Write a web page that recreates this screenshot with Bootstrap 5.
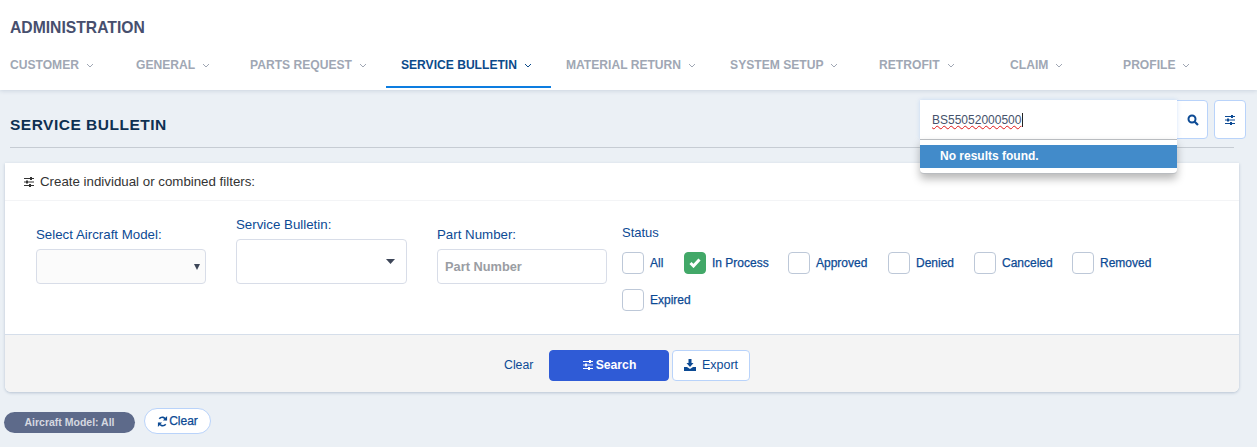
<!DOCTYPE html>
<html lang="en">
<head>
    <meta charset="UTF-8">
    <meta name="viewport" content="width=device-width, initial-scale=1.0">
    <title>Service Bulletin</title>
    <link href="https://cdn.jsdelivr.net/npm/bootstrap@5.3.2/dist/css/bootstrap.min.css" rel="stylesheet">
    <style>
        body {
            background-color: #ebf0f5;
            font-family: "Liberation Sans", Arial, sans-serif;
            font-size: 12px;
            color: #0c4a94;
            overflow: hidden;
        }
        .top-header {
            height: 90px;
            background-color: #fff;
            box-shadow: 0 1px 4px rgba(60, 90, 130, 0.18);
            padding-top: 18px;
        }
        .admin-title {
            font-size: 15.7px;
            font-weight: 700;
            line-height: 20px;
            color: #474f6e;
            margin: 0 0 0 10px;
        }
        .tab-strip {
            margin-top: 7px;
        }
        .tab-item {
            height: 43px;
            padding: 12px 19px 0 15px;
            min-width: 113px;
            font-size: 12.1px;
            font-weight: 700;
            line-height: 16px;
            color: #a0a7b4;
            white-space: nowrap;
        }
        .tab-item svg {
            margin-left: 7px;
            vertical-align: 1px;
        }
        .tab-first { padding-left: 10px; min-width: 121px; }
        .tab-mid { min-width: 114px; }
        .tab-setup { min-width: 149px; }
        .tab-wide { min-width: 131px; }
        .tab-active {
            color: #0b4a8a;
            border-bottom: 2px solid #0d7de0;
        }
        .title-bar {
            position: relative;
            height: 58px;
            margin: 0 23px 15px 10px;
            padding-top: 25px;
            border-bottom: 1px solid #c6ccd3;
        }
        .page-title {
            font-size: 15.5px;
            font-weight: 700;
            letter-spacing: .5px;
            line-height: 20px;
            color: #0e3052;
            margin: 0;
        }
        .search-box {
            position: absolute;
            z-index: 2;
            left: 910px;
            top: 10px;
            width: 257px;
        }
        .search-field {
            height: 39px;
            background-color: #fff;
            padding: 11px 0 0 12px;
            font-size: 12px;
            line-height: 18px;
            color: #46526b;
            box-shadow: 0 0 4px rgba(120, 170, 240, 0.35);
        }
        .search-field span {
            text-decoration: underline wavy #e01818 1px;
            border-right: 1px solid #222;
            padding-right: 1px;
        }
        .no-results {
            background-color: #fff;
            padding: 5px 0;
            height: 35px;
            border: 1px solid #b9bcc0;
            border-left: 0;
            border-right: 0;
            border-radius: 0 0 4px 4px;
            box-shadow: 0 5px 9px rgba(0, 0, 0, 0.28);
        }
        .no-results div {
            height: 23px;
            background-color: #428bca;
            color: #fff;
            font-size: 12px;
            font-weight: 700;
            line-height: 22px;
            padding-left: 20px;
        }
        .square-btn {
            position: absolute;
            top: 10px;
            height: 39px;
            padding: 0;
            background-color: #fff;
            border: 1px solid #b9d3fa;
            border-radius: 4px;
            color: #0c4a94;
        }
        .btn-find { left: 1160px; width: 38px; padding-left: 7px; }
        .btn-tune { left: 1204px; width: 32px; }
        .filter-panel {
            margin: 0 18px 0 5px;
            height: 229px;
            background-color: #fff;
            border: 0;
            border-radius: 0 0 6px 6px;
            box-shadow: 0 1px 3px rgba(60, 90, 130, 0.3);
        }
        .panel-head {
            height: 38px;
            padding: 11px 0 0 18px;
            border-bottom: 1px solid #f3f4f6;
            font-size: 13.3px;
            line-height: 16px;
            color: #333;
        }
        .panel-head svg { margin-right: 5px; vertical-align: -2px; }
        .panel-body {
            height: 133px;
            padding-left: 31px;
            gap: 30px;
        }
        .field-col {
            width: 170px;
            height: 83px;
        }
        .field-wider { width: 171px; }
        .field-col label {
            color: #0c4a94;
            font-size: 13.3px;
            line-height: 16px;
            margin-bottom: 6px;
        }
        .pick-box {
            height: 35px;
            padding: 0 7px;
            border: 1px solid #d8dde8;
            border-radius: 4px;
            background-color: #fff;
            font-size: 12.8px;
            color: #888;
            box-shadow: none;
        }
        .pick-grey {
            background-color: #fbfbfb;
            background-image: url("data:image/svg+xml,%3Csvg xmlns='http://www.w3.org/2000/svg' width='8' height='8'%3E%3Cpath d='M1 1h6L4 7z' fill='%233d4658'/%3E%3C/svg%3E");
            background-position: right 4px center;
            background-size: 8px 8px;
        }
        .pick-tall {
            height: 45px;
            background-image: url("data:image/svg+xml,%3Csvg xmlns='http://www.w3.org/2000/svg' width='9' height='5'%3E%3Cpath d='M0 0h9L4.500 5z' fill='%233d4658'/%3E%3C/svg%3E");
            background-position: right 11px center;
            background-size: 9px 5px;
        }
        .pick-box::placeholder { color: #9a9da3; font-weight: 700; }
        .status-col {
            width: 600px;
            margin-left: -15px;
            padding-top: 24px;
        }
        .status-title {
            font-size: 13px;
            line-height: 16px;
            margin-bottom: 11px;
        }
        .status-list {
            row-gap: 15px;
        }
        .status-opt {
            height: 22px;
            font-size: 12px;
            -webkit-text-stroke: .25px currentColor;
            line-height: 23px;
        }
        .status-opt i {
            display: block;
            width: 22px;
            height: 22px;
            margin-right: 6px;
            border: 1px solid #bdc8d8;
            border-radius: 4px;
            background-color: #fff;
        }
        .status-opt i.ticked {
            background-color: #42a868;
            border-color: #42a868;
            padding: 5px 4px;
        }
        .status-opt i.ticked svg { display: block; }
        .w-all { width: 62px; }
        .w-process { width: 104px; }
        .w-approved { width: 100px; }
        .w-denied { width: 86px; }
        .w-canceled { width: 98px; }
        .panel-foot {
            height: 58px;
            background-color: #f4f4f4;
            border-top: 1px solid #d5deea;
            border-radius: 0 0 6px 6px;
            padding-top: 15px;
            padding-left: 499px;
        }
        .foot-clear {
            width: 45px;
            font-size: 12.3px;
            line-height: 31px;
            color: #0c4a94;
        }
        .foot-btn {
            height: 31px;
            padding: 0;
            font-size: 12.5px;
            line-height: 29px;
            border-radius: 4px;
        }
        .foot-search {
            width: 120px;
            margin-right: 3px;
            background-color: #2f5bd6;
            border: 1px solid #2f5bd6;
            color: #fff;
            font-size: 12.2px;
            font-weight: 700;
        }
        .foot-search svg { margin-right: 2px; }
        .foot-export {
            width: 78px;
            background-color: #fff;
            border: 1px solid #b9d3fa;
            color: #0c4a94;
        }
        .foot-export svg { margin-right: 6px; }
        .foot-btn svg { vertical-align: -2px; }
        .applied-row {
            margin: 20px 0 0 4px;
            gap: 9px;
        }
        .applied-pill {
            width: 131px;
            height: 21px;
            border-radius: 11px;
            background-color: #5d6a8a;
            color: #d5d8e0;
            font-size: 10.500px;
            font-weight: 700;
            line-height: 21px;
            text-align: center;
        }
        .applied-clear {
            width: 67px;
            height: 26px;
            padding: 0;
            margin-top: -4px;
            background-color: #fff;
            border: 1px solid #b9d3fa;
            border-radius: 13px;
            color: #0c4a94;
            font-size: 12px;
            -webkit-text-stroke: .25px currentColor;
            line-height: 24px;
        }
        .applied-clear svg { vertical-align: -2px; margin-right: 1px; }
    </style>
</head>
<body>
    <!-- Cabecera -->
    <header class="top-header">
        <h1 class="admin-title">ADMINISTRATION</h1>
        <nav class="tab-strip d-flex">
            <div class="tab-item tab-first">CUSTOMER<svg width="8" height="5" viewBox="0 0 8 5"><path d="M1 1l3 3 3-3" fill="none" stroke="currentColor"/></svg></div>
            <div class="tab-item tab-mid">GENERAL<svg width="8" height="5" viewBox="0 0 8 5"><path d="M1 1l3 3 3-3" fill="none" stroke="currentColor"/></svg></div>
            <div class="tab-item">PARTS REQUEST<svg width="8" height="5" viewBox="0 0 8 5"><path d="M1 1l3 3 3-3" fill="none" stroke="currentColor"/></svg></div>
            <div class="tab-item tab-active">SERVICE BULLETIN<svg width="8" height="5" viewBox="0 0 8 5"><path d="M1 1l3 3 3-3" fill="none" stroke="currentColor"/></svg></div>
            <div class="tab-item">MATERIAL RETURN<svg width="8" height="5" viewBox="0 0 8 5"><path d="M1 1l3 3 3-3" fill="none" stroke="currentColor"/></svg></div>
            <div class="tab-item tab-setup">SYSTEM SETUP<svg width="8" height="5" viewBox="0 0 8 5"><path d="M1 1l3 3 3-3" fill="none" stroke="currentColor"/></svg></div>
            <div class="tab-item tab-wide">RETROFIT<svg width="8" height="5" viewBox="0 0 8 5"><path d="M1 1l3 3 3-3" fill="none" stroke="currentColor"/></svg></div>
            <div class="tab-item">CLAIM<svg width="8" height="5" viewBox="0 0 8 5"><path d="M1 1l3 3 3-3" fill="none" stroke="currentColor"/></svg></div>
            <div class="tab-item">PROFILE<svg width="8" height="5" viewBox="0 0 8 5"><path d="M1 1l3 3 3-3" fill="none" stroke="currentColor"/></svg></div>
        </nav>
    </header>

    <!-- Titulo y busqueda -->
    <div class="title-bar">
        <h2 class="page-title">SERVICE BULLETIN</h2>
        <div class="search-box">
            <div class="search-field"><span>BS55052000500</span></div>
            <div class="no-results"><div>No results found.</div></div>
        </div>
        <button class="square-btn btn-find" type="button" aria-label="Search"><svg width="12" height="12" viewBox="0 0 12 12"><circle cx="5" cy="5" r="3.500" fill="none" stroke="currentColor" stroke-width="2"/><path d="M7.700 7.700L11 11" stroke="currentColor" stroke-width="2.200"/></svg></button>
        <button class="square-btn btn-tune" type="button" aria-label="Filters"><svg width="12" height="12" viewBox="0 0 12 12"><path d="M1 2.500h10M1 6h10M1 9.500h10" stroke="currentColor"/><path d="M7 1h2v3H7zM3 4.500h2v3H3zM6 8h2v3H6z" fill="currentColor"/></svg></button>
    </div>

    <!-- Filtros -->
    <section class="filter-panel card">
        <div class="panel-head"><svg width="12" height="12" viewBox="0 0 12 12"><path d="M1 2.500h10M1 6h10M1 9.500h10" stroke="#333"/><path d="M7 1h2v3H7zM3 4.500h2v3H3zM6 8h2v3H6z" fill="#333"/></svg>Create individual or combined filters:</div>
        <div class="panel-body d-flex align-items-start">
            <div class="field-col d-flex flex-column justify-content-end">
                <label for="model">Select Aircraft Model:</label>
                <select id="model" class="form-select pick-box pick-grey"></select>
            </div>
            <div class="field-col field-wider d-flex flex-column justify-content-end">
                <label for="bulletin">Service Bulletin:</label>
                <select id="bulletin" class="form-select pick-box pick-tall"></select>
            </div>
            <div class="field-col d-flex flex-column justify-content-end">
                <label for="part">Part Number:</label>
                <input id="part" type="text" class="form-control pick-box" placeholder="Part Number">
            </div>
            <div class="status-col">
                <div class="status-title">Status</div>
                <div class="status-list d-flex flex-wrap">
                    <div class="status-opt w-all d-flex"><i></i>All</div>
                    <div class="status-opt w-process d-flex"><i class="ticked"><svg width="12" height="10" viewBox="0 0 12 10"><path d="M1.500 5l3 3 6-6.500" fill="none" stroke="#fff" stroke-width="3"/></svg></i>In Process</div>
                    <div class="status-opt w-approved d-flex"><i></i>Approved</div>
                    <div class="status-opt w-denied d-flex"><i></i>Denied</div>
                    <div class="status-opt w-canceled d-flex"><i></i>Canceled</div>
                    <div class="status-opt d-flex"><i></i>Removed</div>
                    <div class="status-opt w-100 d-flex"><i></i>Expired</div>
                </div>
            </div>
        </div>
        <div class="panel-foot d-flex">
            <div class="foot-clear">Clear</div>
            <button type="button" class="btn foot-btn foot-search"><svg width="12" height="12" viewBox="0 0 12 12"><path d="M1 2.500h10M1 6h10M1 9.500h10" stroke="#fff"/><path d="M7 1h2v3H7zM3 4.500h2v3H3zM6 8h2v3H6z" fill="#fff"/></svg>Search</button>
            <button type="button" class="btn foot-btn foot-export"><svg width="12" height="12" viewBox="0 0 12 12"><path d="M4.500 0h3v4h2L6 8 2.500 4h2z" fill="currentColor"/><path d="M0 8h3l3 2 3-2h3v4H0z" fill="currentColor"/></svg>Export</button>
        </div>
    </section>

    <!-- Filtros aplicados -->
    <div class="applied-row d-flex align-items-start">
        <div class="applied-pill">Aircraft Model: All</div>
        <button type="button" class="btn applied-clear"><svg width="11" height="11" viewBox="0 0 12 12"><path d="M10 4.500A4.300 4.300 0 0 0 2.500 3M2 7.500A4.300 4.300 0 0 0 9.500 9" fill="none" stroke="currentColor" stroke-width="1.800"/><path d="M11 0v5H6.500zM1 12V7h4.500z" fill="currentColor"/></svg>Clear</button>
    </div>

    <script src="https://cdn.jsdelivr.net/npm/bootstrap@5.3.2/dist/js/bootstrap.bundle.min.js"></script>
</body>
</html>
